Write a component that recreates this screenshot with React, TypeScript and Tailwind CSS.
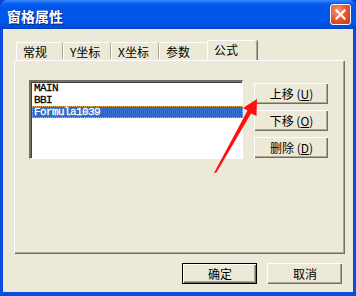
import type { ReactNode } from "react";

const CJK = "font-['SimSun','Noto_Sans_CJK_SC',sans-serif]";

const TABS = [
  { label: "常规", w: "w-[47px]" },
  { label: "Y坐标", w: "w-[48px]" },
  { label: "X坐标", w: "w-[48px]" },
  { label: "参数", w: "w-[50px]" },
];

const ITEMS = ["MAIN", "BBI", "Formula1039"];

export default function App() {
  return (
    <div className={`relative flex h-[296px] w-[356px] flex-col overflow-hidden bg-[#0841d0] text-black ${CJK}`}>
      <TitleBar />
      <div className="flex flex-1 flex-col border-x-[3px] border-b-[4px] border-[#0a4be0] bg-[#ece9d8] pt-[11px]">
        <TabStrip />
        <div className="relative ml-[11px] h-[193px] w-[330px] border-l border-t border-white shadow-[inset_-1px_-1px_0_#aca899,1px_1px_0_#716f64] pl-[14px] pt-[19px]">
          <div className="flex items-start">
            <ListBox />
            <div className="ml-[11px] mt-[3px] flex flex-col gap-[6px]">
              <Btn w="w-[74px]">上移 (<u>U</u>)</Btn>
              <Btn w="w-[74px]">下移 (<u>O</u>)</Btn>
              <Btn w="w-[74px]">删除 (<u>D</u>)</Btn>
            </div>
          </div>
        </div>
        <div className="mt-[10px] flex justify-end gap-[10px] pr-[11px]">
          <Btn w="w-[75px]" primary>确定</Btn>
          <Btn w="w-[75px]">取消</Btn>
        </div>
      </div>
      <Arrow />
    </div>
  );
}

function TitleBar() {
  return (
    <div className="flex h-[29px] shrink-0 items-center justify-between rounded-t-[7px] bg-[linear-gradient(180deg,#3b8cff_0%,#0a5ff0_12%,#0055e6_30%,#0058ee_70%,#0050e0_90%,#0042c8_100%)] pl-[7px] pr-[5px]">
      <span className="pt-[2px] text-[14px] font-bold leading-none text-white [text-shadow:1px_1px_0_#0a1e6e]">
        窗格属性
      </span>
      <div className="grid h-[21px] w-[21px] place-items-center rounded-[3px] border border-white bg-[radial-gradient(circle_at_35%_30%,#f39b7c,#e0502a_55%,#c8381a)]">
        <svg width="11" height="11" viewBox="0 0 11 11">
          <path d="M1.5 1.5 L9.5 9.5 M9.5 1.5 L1.5 9.5" stroke="white" strokeWidth="2.2" strokeLinecap="square" />
        </svg>
      </div>
    </div>
  );
}

function TabStrip() {
  return (
    <div className="relative z-10 flex h-[20px] items-end pl-[13px] text-[12px] leading-none">
      {TABS.map((t) => (
        <div
          key={t.label}
          className={`${t.w} h-[17px] rounded-tl-[2px] rounded-tr-[2px] border-l border-t border-white shadow-[inset_-1px_0_0_#aca899,1px_0_0_#716f64] pl-[6px] pt-[3px] mb-[1px]`}
        >
          {t.label}
        </div>
      ))}
      <div className="-ml-[2px] h-[20px] w-[50px] rounded-tl-[2px] rounded-tr-[2px] border-l border-t border-white bg-[#ece9d8] shadow-[inset_-1px_0_0_#aca899,1px_0_0_#716f64] pl-[6px] pt-[3px]">
        公式
      </div>
    </div>
  );
}

function ListBox() {
  return (
    <div className="h-[79px] w-[214px] border-l-2 border-t-2 border-l-[#716f64] border-t-[#716f64] border-r border-b border-r-white border-b-white bg-white shadow-[inset_1px_1px_0_#404040]">
      <div className="pl-[1px] font-['Liberation_Mono',monospace] text-[11px] leading-[12px] tracking-[-0.6px] [-webkit-text-stroke:0.3px_currentColor]">
        {ITEMS.map((it, i) =>
          i === 2 ? (
            <div key={it} className="h-[12px] w-[211px] border border-dotted border-[#e8b04a] bg-[#316ac5] pl-[1px] leading-[10px] text-white">
              {it}
            </div>
          ) : (
            <div key={it} className="h-[12px] pl-[2px]">
              {it}
            </div>
          )
        )}
      </div>
    </div>
  );
}

function Btn({ children, w, primary }: { children: ReactNode; w: string; primary?: boolean }) {
  return (
    <div className={`${w} h-[21px] ${primary ? "border border-black" : ""}`}>
      <div className="flex h-full w-full items-center justify-center border-l border-t border-white bg-[#ece9d8] text-[12px] leading-none shadow-[inset_-1px_-1px_0_#716f64,inset_-2px_-2px_0_#aca899]">
        <span>{children}</span>
      </div>
    </div>
  );
}

function Arrow() {
  return (
    <svg className="pointer-events-none absolute left-0 top-0" width="356" height="296">
      <polygon
        points="257,99 243,108 247.5,110.5 214,173 216.5,172.5 251,113.5 256.5,116"
        fill="#ff1010"
      />
    </svg>
  );
}
